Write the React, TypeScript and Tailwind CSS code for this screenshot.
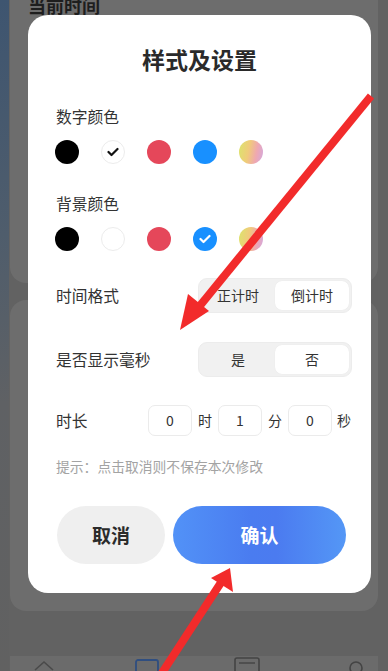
import React from "react";

const FONT = { fontFamily: '"Noto Sans CJK SC", "Noto Sans", sans-serif' };

function Check({ color }: { color: string }) {
  return (
    <svg width="12" height="10" viewBox="0 0 12 10">
      <polyline points="1.5,5 4.5,8 10.5,2" fill="none" stroke={color} strokeWidth="2.2" strokeLinecap="round" strokeLinejoin="round" />
    </svg>
  );
}

function ColorRow({ selected }: { selected: number }) {
  const items = [
    "bg-black",
    "bg-white border border-[#ececec]",
    "bg-[#e5475a]",
    "bg-[#1890ff]",
    "bg-[linear-gradient(100deg,#dbe56c_0%,#f0cb7a_40%,#efa8b0_70%,#d2a8e0_100%)]",
  ];
  return (
    <div className="flex items-center gap-[22px] pl-[27px]">
      {items.map((c, i) => (
        <div key={i} className={`w-[24px] h-[24px] rounded-full flex items-center justify-center ${c}`}>
          {i === selected && <Check color={i === 1 ? "#111" : "#fff"} />}
        </div>
      ))}
    </div>
  );
}

function Segment({ a, b }: { a: string; b: string }) {
  return (
    <div className="ml-auto w-[154px] h-[35px] rounded-[9px] bg-[#f1f1f1] border border-[#ececec] p-[2px] flex">
      <div className="flex-1 flex items-center justify-center text-[14px] text-[#333]">{a}</div>
      <div className="flex-1 flex items-center justify-center text-[14px] text-[#333] bg-white rounded-[7px] shadow-[0_0_1px_rgba(0,0,0,0.08)]">{b}</div>
    </div>
  );
}

function NumBox({ v }: { v: string }) {
  return (
    <div className="w-[44px] h-[31px] rounded-[7px] border border-[#ebebeb] bg-white flex items-center justify-center text-[14px] text-[#333]">
      {v}
    </div>
  );
}

export default function App() {
  return (
    <div className="relative w-[388px] h-[671px] overflow-hidden bg-[#626262] flex" style={FONT}>
      {/* background page */}
      <div className="w-[9px] h-full bg-[linear-gradient(180deg,#3e5570_0%,#4f5d6c_35%,#5f6164_60%,#616161_100%)]" />
      <div className="flex-1 flex flex-col pl-[1px] pr-[10px]">
        <div className="mt-[-20px] h-[303px] rounded-[16px] bg-[#6d6d6d] pl-[18px]">
          <div className="mt-[13px] text-[18px] leading-[24px] font-bold text-[#1e1e1e]">当前时间</div>
        </div>
        <div className="mt-[17px] h-[311px] rounded-[16px] bg-[#6d6d6d]" />
        <div className="flex-1" />
        <div className="h-[15px] bg-[#6b6b6b] relative">
          <svg className="absolute left-0 top-0" width="378" height="15" viewBox="0 0 378 15">
            <path d="M25 14 L34 6 L43 14" fill="none" stroke="#4a4a4a" strokeWidth="1.6" />
            <rect x="126" y="4" width="22" height="14" rx="2" fill="none" stroke="#2f4e80" strokeWidth="1.8" />
            <rect x="225" y="2" width="24" height="16" rx="2" fill="none" stroke="#444" strokeWidth="1.6" />
            <line x1="229" y1="7" x2="245" y2="7" stroke="#444" strokeWidth="1.4" />
            <circle cx="346" cy="12" r="6" fill="none" stroke="#444" strokeWidth="1.6" />
          </svg>
        </div>
      </div>

      {/* modal */}
      <div className="absolute left-[28px] top-[15px] w-[343px] h-[578px] bg-white rounded-[20px] flex flex-col pt-[29px]">
        <div className="text-center text-[23px] leading-[30px] font-bold text-[#2a2a2a]">样式及设置</div>

        <div className="mt-[33px] pl-[28px] text-[15.75px] leading-[20px] text-[#333]">数字颜色</div>
        <div className="mt-[13px]">
          <ColorRow selected={1} />
        </div>

        <div className="mt-[30px] pl-[28px] text-[15.75px] leading-[20px] text-[#333]">背景颜色</div>
        <div className="mt-[13px]">
          <ColorRow selected={3} />
        </div>

        <div className="mt-[27px] pl-[28px] pr-[19px] flex items-center">
          <span className="text-[15.75px] leading-[20px] text-[#333]">时间格式</span>
          <Segment a="正计时" b="倒计时" />
        </div>

        <div className="mt-[29px] pl-[28px] pr-[19px] flex items-center">
          <span className="text-[15.75px] leading-[20px] text-[#333]">是否显示毫秒</span>
          <Segment a="是" b="否" />
        </div>

        <div className="mt-[28px] pl-[28px] pr-[20px] flex items-center">
          <span className="text-[15.75px] leading-[20px] text-[#333]">时长</span>
          <div className="ml-auto flex items-center">
            <NumBox v="0" />
            <span className="w-[26px] text-center text-[14px] text-[#333]">时</span>
            <NumBox v="1" />
            <span className="w-[26px] text-center text-[14px] text-[#333]">分</span>
            <NumBox v="0" />
            <span className="w-[19px] text-right text-[14px] text-[#333]">秒</span>
          </div>
        </div>

        <div className="mt-[20px] pl-[28px] text-[13.8px] leading-[20px] text-[#a3a3a3]">提示：点击取消则不保存本次修改</div>

        <div className="mt-[30px] pl-[29px] pr-[25px] flex gap-[8px]">
          <div className="w-[108px] h-[58px] rounded-full bg-[#efefef] flex items-center justify-center text-[19px] font-bold text-[#2b2b2b]">取消</div>
          <div className="flex-1 h-[58px] rounded-full bg-[linear-gradient(90deg,#5292f7_0%,#4a7cf0_45%,#4b7bf0_60%,#5497f6_100%)] flex items-center justify-center text-[19px] font-bold text-white">确认</div>
        </div>
      </div>

      {/* annotation arrows */}
      <svg className="absolute left-0 top-0 pointer-events-none" width="388" height="671" viewBox="0 0 388 671">
        <line x1="371" y1="96" x2="194" y2="313" stroke="#f22b2b" strokeWidth="8" />
        <polygon points="180,330 209,311 188,294" fill="#f22b2b" />
        <line x1="160" y1="676" x2="222" y2="581" stroke="#f22b2b" strokeWidth="8" />
        <polygon points="230,568 233,592 211,578" fill="#f22b2b" />
      </svg>
    </div>
  );
}
